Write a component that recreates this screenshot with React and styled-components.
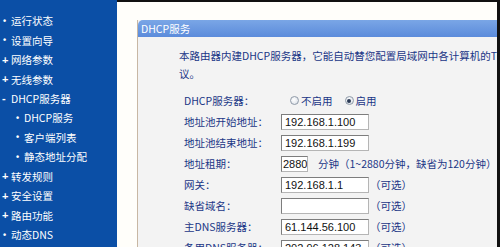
import React from 'react'
import styled, { createGlobalStyle } from 'styled-components'

const GlobalStyle = createGlobalStyle`
    body {
        margin: 0;
        background: #ffffff;
        font-family: "Noto Sans CJK SC", "Liberation Sans", sans-serif;
    }
`

const menu = [
    { label: '运行状态', mark: 'dot' },
    { label: '设置向导', mark: 'dot' },
    { label: '网络参数', mark: 'plus' },
    { label: '无线参数', mark: 'plus' },
    { label: 'DHCP服务器', mark: 'minus' },
    { label: 'DHCP服务', mark: 'dot', sub: true },
    { label: '客户端列表', mark: 'dot', sub: true },
    { label: '静态地址分配', mark: 'dot', sub: true },
    { label: '转发规则', mark: 'plus' },
    { label: '安全设置', mark: 'plus' },
    { label: '路由功能', mark: 'plus' },
    { label: '动态DNS', mark: 'dot' },
]

const marks = { dot: '•', plus: '+', minus: '-' }

function App() {
    return (
        <>
            <GlobalStyle />
            <Page>
                <Sidebar>
                    {menu.map((item) => (
                        <MenuItem key={item.label} $sub={item.sub}>
                            <Mark $kind={item.mark}>{marks[item.mark]}</Mark>
                            {item.label}
                        </MenuItem>
                    ))}
                </Sidebar>
                <Main>
                    <Panel>
                        <PanelHeader>DHCP服务</PanelHeader>
                        <PanelBody>
                            <Description>
                                本路由器内建DHCP服务器，它能自动替您配置局域网中各计算机的TCP/IP协
                                <br />
                                议。
                            </Description>
                            <Form>
                                <Label>DHCP服务器：</Label>
                                <Control>
                                    <RadioOption>
                                        <Radio />
                                        不启用
                                    </RadioOption>
                                    <RadioOption>
                                        <Radio $checked />
                                        启用
                                    </RadioOption>
                                </Control>

                                <Label>地址池开始地址：</Label>
                                <Control>
                                    <Field>192.168.1.100</Field>
                                </Control>

                                <Label>地址池结束地址：</Label>
                                <Control>
                                    <Field>192.168.1.199</Field>
                                </Control>

                                <Label>地址租期：</Label>
                                <Control>
                                    <Field $short>2880</Field>
                                    <Note $gap={10}>分钟（1~2880分钟，缺省为120分钟）</Note>
                                </Control>

                                <Label>网关：</Label>
                                <Control>
                                    <Field>192.168.1.1</Field>
                                    <Note>（可选）</Note>
                                </Control>

                                <Label>缺省域名：</Label>
                                <Control>
                                    <Field></Field>
                                    <Note>（可选）</Note>
                                </Control>

                                <Label>主DNS服务器：</Label>
                                <Control>
                                    <Field>61.144.56.100</Field>
                                    <Note>（可选）</Note>
                                </Control>

                                <Label>备用DNS服务器：</Label>
                                <Control>
                                    <Field>202.96.128.143</Field>
                                    <Note>（可选）</Note>
                                </Control>
                            </Form>
                        </PanelBody>
                    </Panel>
                </Main>
            </Page>
        </>
    )
}

export default App

const Page = styled.div`
    display: flex;
    width: 500px;
    height: 247px;
    overflow: hidden;
`

const Sidebar = styled.div`
    width: 117px;
    flex-shrink: 0;
    background: #0b4fa6;
    padding-top: 11px;
    box-sizing: border-box;
`

const MenuItem = styled.div`
    display: flex;
    align-items: center;
    height: 19.45px;
    padding-left: ${(p) => (p.$sub ? '15px' : '2px')};
    color: #ffffff;
    font-size: 10.5px;
    white-space: nowrap;
`

const Mark = styled.span`
    display: inline-block;
    width: ${(p) => (p.$kind === 'dot' ? '8px' : '9px')};
    margin-left: ${(p) => (p.$kind === 'dot' ? '1px' : '0')};
    font-family: "Liberation Sans", sans-serif;
    font-weight: bold;
    font-size: ${(p) => (p.$kind === 'dot' ? '9px' : '11px')};
`

const Main = styled.div`
    flex: 1;
    min-width: 0;
    display: flex;
    flex-direction: column;
    background: #fffefa;
    border-top: 2px solid #111111;
    border-right: 3px solid #111111;
    padding: 18px 0 0 20px;
    overflow: hidden;
`

const Panel = styled.div`
    flex: 1;
    display: flex;
    flex-direction: column;
    background: #f3f3f3;
    border-left: 1px solid #c8b7a3;
`

const PanelHeader = styled.div`
    height: 17px;
    line-height: 17px;
    padding-left: 3px;
    border-top-left-radius: 5px;
    background: linear-gradient(#7aa6e6, #5b8bdb);
    color: #ffffff;
    font-size: 10.5px;
`

const PanelBody = styled.div`
    padding: 10px 0 0 41px;
`

const Description = styled.div`
    color: #1a3686;
    font-size: 10.5px;
    line-height: 18px;
    white-space: nowrap;
`

const Form = styled.div`
    display: grid;
    grid-template-columns: 97px auto;
    grid-auto-rows: 21px;
    margin: 7px 0 0 5px;
`

const Label = styled.div`
    display: flex;
    align-items: center;
    color: #1a3686;
    font-size: 10.5px;
    white-space: nowrap;
`

const Control = styled.div`
    display: flex;
    align-items: center;
    white-space: nowrap;
`

const Field = styled.div`
    box-sizing: border-box;
    width: ${(p) => (p.$short ? '27px' : '88px')};
    height: 16px;
    line-height: 14px;
    padding: ${(p) => (p.$short ? '0 1px' : '0 3px')};
    overflow: hidden;
    background: #ffffff;
    border: 1px solid #7d7d7d;
    border-right-color: #b5b5b5;
    border-bottom-color: #b5b5b5;
    color: #111111;
    font-family: "Liberation Sans", sans-serif;
    font-size: 11px;
`

const Note = styled.span`
    margin-left: ${(p) => p.$gap ?? 1}px;
    color: #1a3686;
    font-size: 10.5px;
`

const RadioOption = styled.span`
    display: inline-flex;
    align-items: center;
    color: #1a3686;
    font-size: 10.5px;
    margin-left: 9px;
    margin-right: 3px;
`

const Radio = styled.span`
    position: relative;
    box-sizing: border-box;
    width: 9px;
    height: 9px;
    margin-right: 2px;
    border-radius: 50%;
    border: 1px solid #8f9aa8;
    background: radial-gradient(circle at 40% 40%, #ffffff, #d6dce4);

    &::after {
        content: "";
        display: ${(p) => (p.$checked ? 'block' : 'none')};
        position: absolute;
        left: 1.5px;
        top: 1.5px;
        width: 4px;
        height: 4px;
        border-radius: 50%;
        background: #2b3a55;
    }
`
